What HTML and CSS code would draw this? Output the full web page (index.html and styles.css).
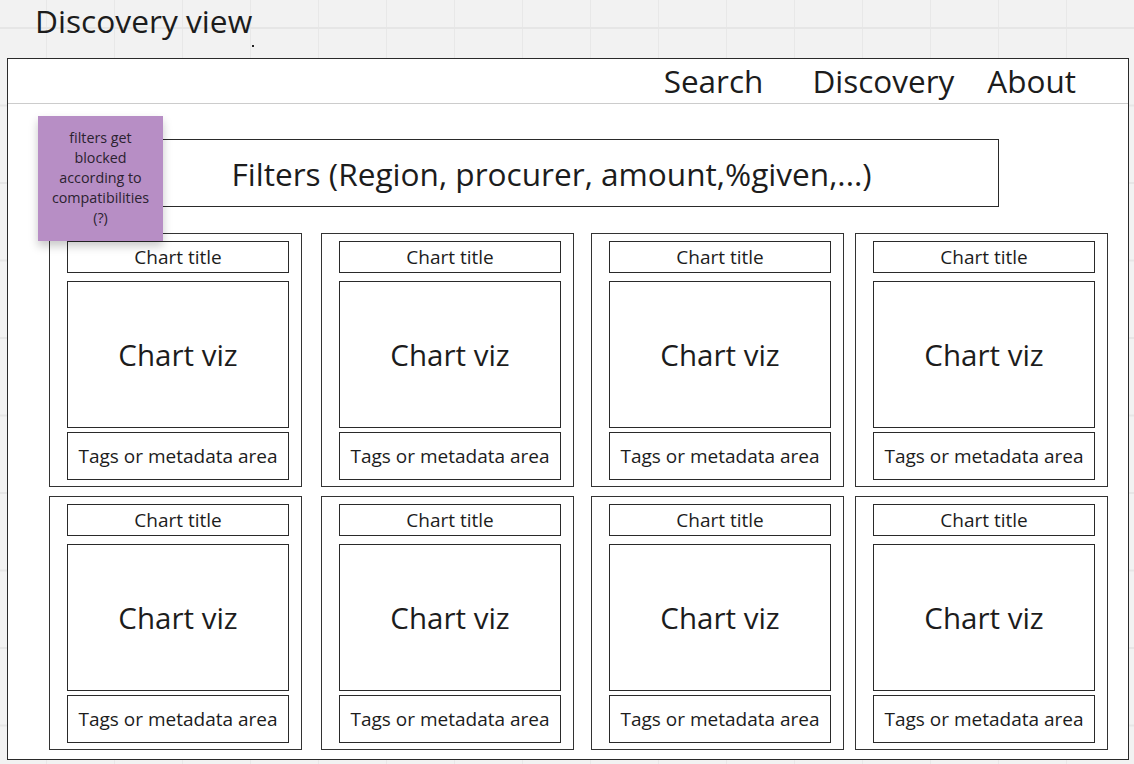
FILE: index.html
```html
<!DOCTYPE html>
<html lang="en">
<head>
<meta charset="utf-8">
<title>Discovery view</title>
<link rel="stylesheet" href="styles.css">
</head>
<body>
<div class="board">
  <h1 class="board-title">Discovery view</h1>
  <span class="stray-dot"></span>
  <div class="frame">
    <nav class="topnav">
      <span class="nav-link nav-search">Search</span>
      <span class="nav-link">Discovery</span>
      <span class="nav-link">About</span>
    </nav>
    <div class="content">
      <div class="sticky">filters get blocked according to compatibilities (?)</div>
      <div class="filters">Filters (Region, procurer, amount,%given,...)</div>
      <div class="cards">
        <div class="card"><div class="box title">Chart title</div><div class="box viz">Chart viz</div><div class="box tags">Tags or metadata area</div></div>
        <div class="card"><div class="box title">Chart title</div><div class="box viz">Chart viz</div><div class="box tags">Tags or metadata area</div></div>
        <div class="card"><div class="box title">Chart title</div><div class="box viz">Chart viz</div><div class="box tags">Tags or metadata area</div></div>
        <div class="card"><div class="box title">Chart title</div><div class="box viz">Chart viz</div><div class="box tags">Tags or metadata area</div></div>
        <div class="card"><div class="box title">Chart title</div><div class="box viz">Chart viz</div><div class="box tags">Tags or metadata area</div></div>
        <div class="card"><div class="box title">Chart title</div><div class="box viz">Chart viz</div><div class="box tags">Tags or metadata area</div></div>
        <div class="card"><div class="box title">Chart title</div><div class="box viz">Chart viz</div><div class="box tags">Tags or metadata area</div></div>
        <div class="card"><div class="box title">Chart title</div><div class="box viz">Chart viz</div><div class="box tags">Tags or metadata area</div></div>
      </div>
    </div>
  </div>
</div>
</body>
</html>
```

FILE: styles.css
```css
* { box-sizing: border-box; }
html, body { margin: 0; padding: 0; }
body {
  width: 1134px;
  height: 764px;
  overflow: hidden;
  font-family: "Open Sans", "Noto Sans", sans-serif;
  color: #1c1c1c;
  background-color: #f2f2f2;
  background-image:
    linear-gradient(to bottom, #e6e6e6 0, #e6e6e6 2px, transparent 2px),
    linear-gradient(to right, #e8e8e8 0, #e8e8e8 1px, transparent 1px);
  background-size: 77.5px 77.5px, 68px 68px;
  background-position: 0 27px, 46px 0;
}
.board { position: relative; }
.board-title {
  margin: 0;
  padding-left: 35px;
  height: 58px;
  font-size: 31.7px;
  font-weight: 400;
  line-height: 41px;
  color: #1c1c1c;
}
.stray-dot {
  position: absolute;
  left: 252px;
  top: 45px;
  width: 2px;
  height: 2px;
  background: #222;
}
.frame {
  margin-left: 7px;
  width: 1122px;
  height: 702px;
  background: #fff;
  border: 1px solid #2a2a2a;
}
.topnav {
  display: flex;
  justify-content: flex-end;
  align-items: center;
  gap: 33px;
  height: 45px;
  padding-right: 52px;
  border-bottom: 1px solid #cccccc;
}
.nav-link {
  font-size: 31.5px;
  line-height: 44px;
  color: #1c1c1c;
}
.nav-search { margin-right: 16px; }
.content {
  position: relative;
  padding-top: 35px;
}
.sticky {
  position: absolute;
  left: 30px;
  top: 12px;
  width: 125px;
  height: 125px;
  padding: 12px 8px 0;
  background: #b78ec5;
  box-shadow: 0 5px 9px rgba(0, 0, 0, 0.22);
  font-size: 14.3px;
  line-height: 20px;
  text-align: center;
  color: #2b2230;
  z-index: 2;
}
.filters {
  margin-left: 96px;
  width: 895px;
  height: 68px;
  border: 1px solid #2a2a2a;
  display: flex;
  align-items: center;
  justify-content: center;
  font-size: 31.6px;
  color: #1c1c1c;
}
.cards {
  margin-top: 26px;
  margin-left: 41px;
  display: grid;
  grid-template-columns: 272px 270px 264px 253px;
  row-gap: 9px;
}
.card {
  width: 253px;
  height: 254px;
  border: 1px solid #333;
  padding: 7px 12px 6px 17px;
  display: flex;
  flex-direction: column;
}
.box {
  border: 1px solid #2a2a2a;
  display: flex;
  align-items: center;
  justify-content: center;
  white-space: nowrap;
}
.title {
  height: 32px;
  font-size: 19px;
}
.viz {
  margin-top: 8px;
  height: 147px;
  font-size: 29.5px;
}
.tags {
  margin-top: 4px;
  height: 48px;
  font-size: 19px;
}
```
